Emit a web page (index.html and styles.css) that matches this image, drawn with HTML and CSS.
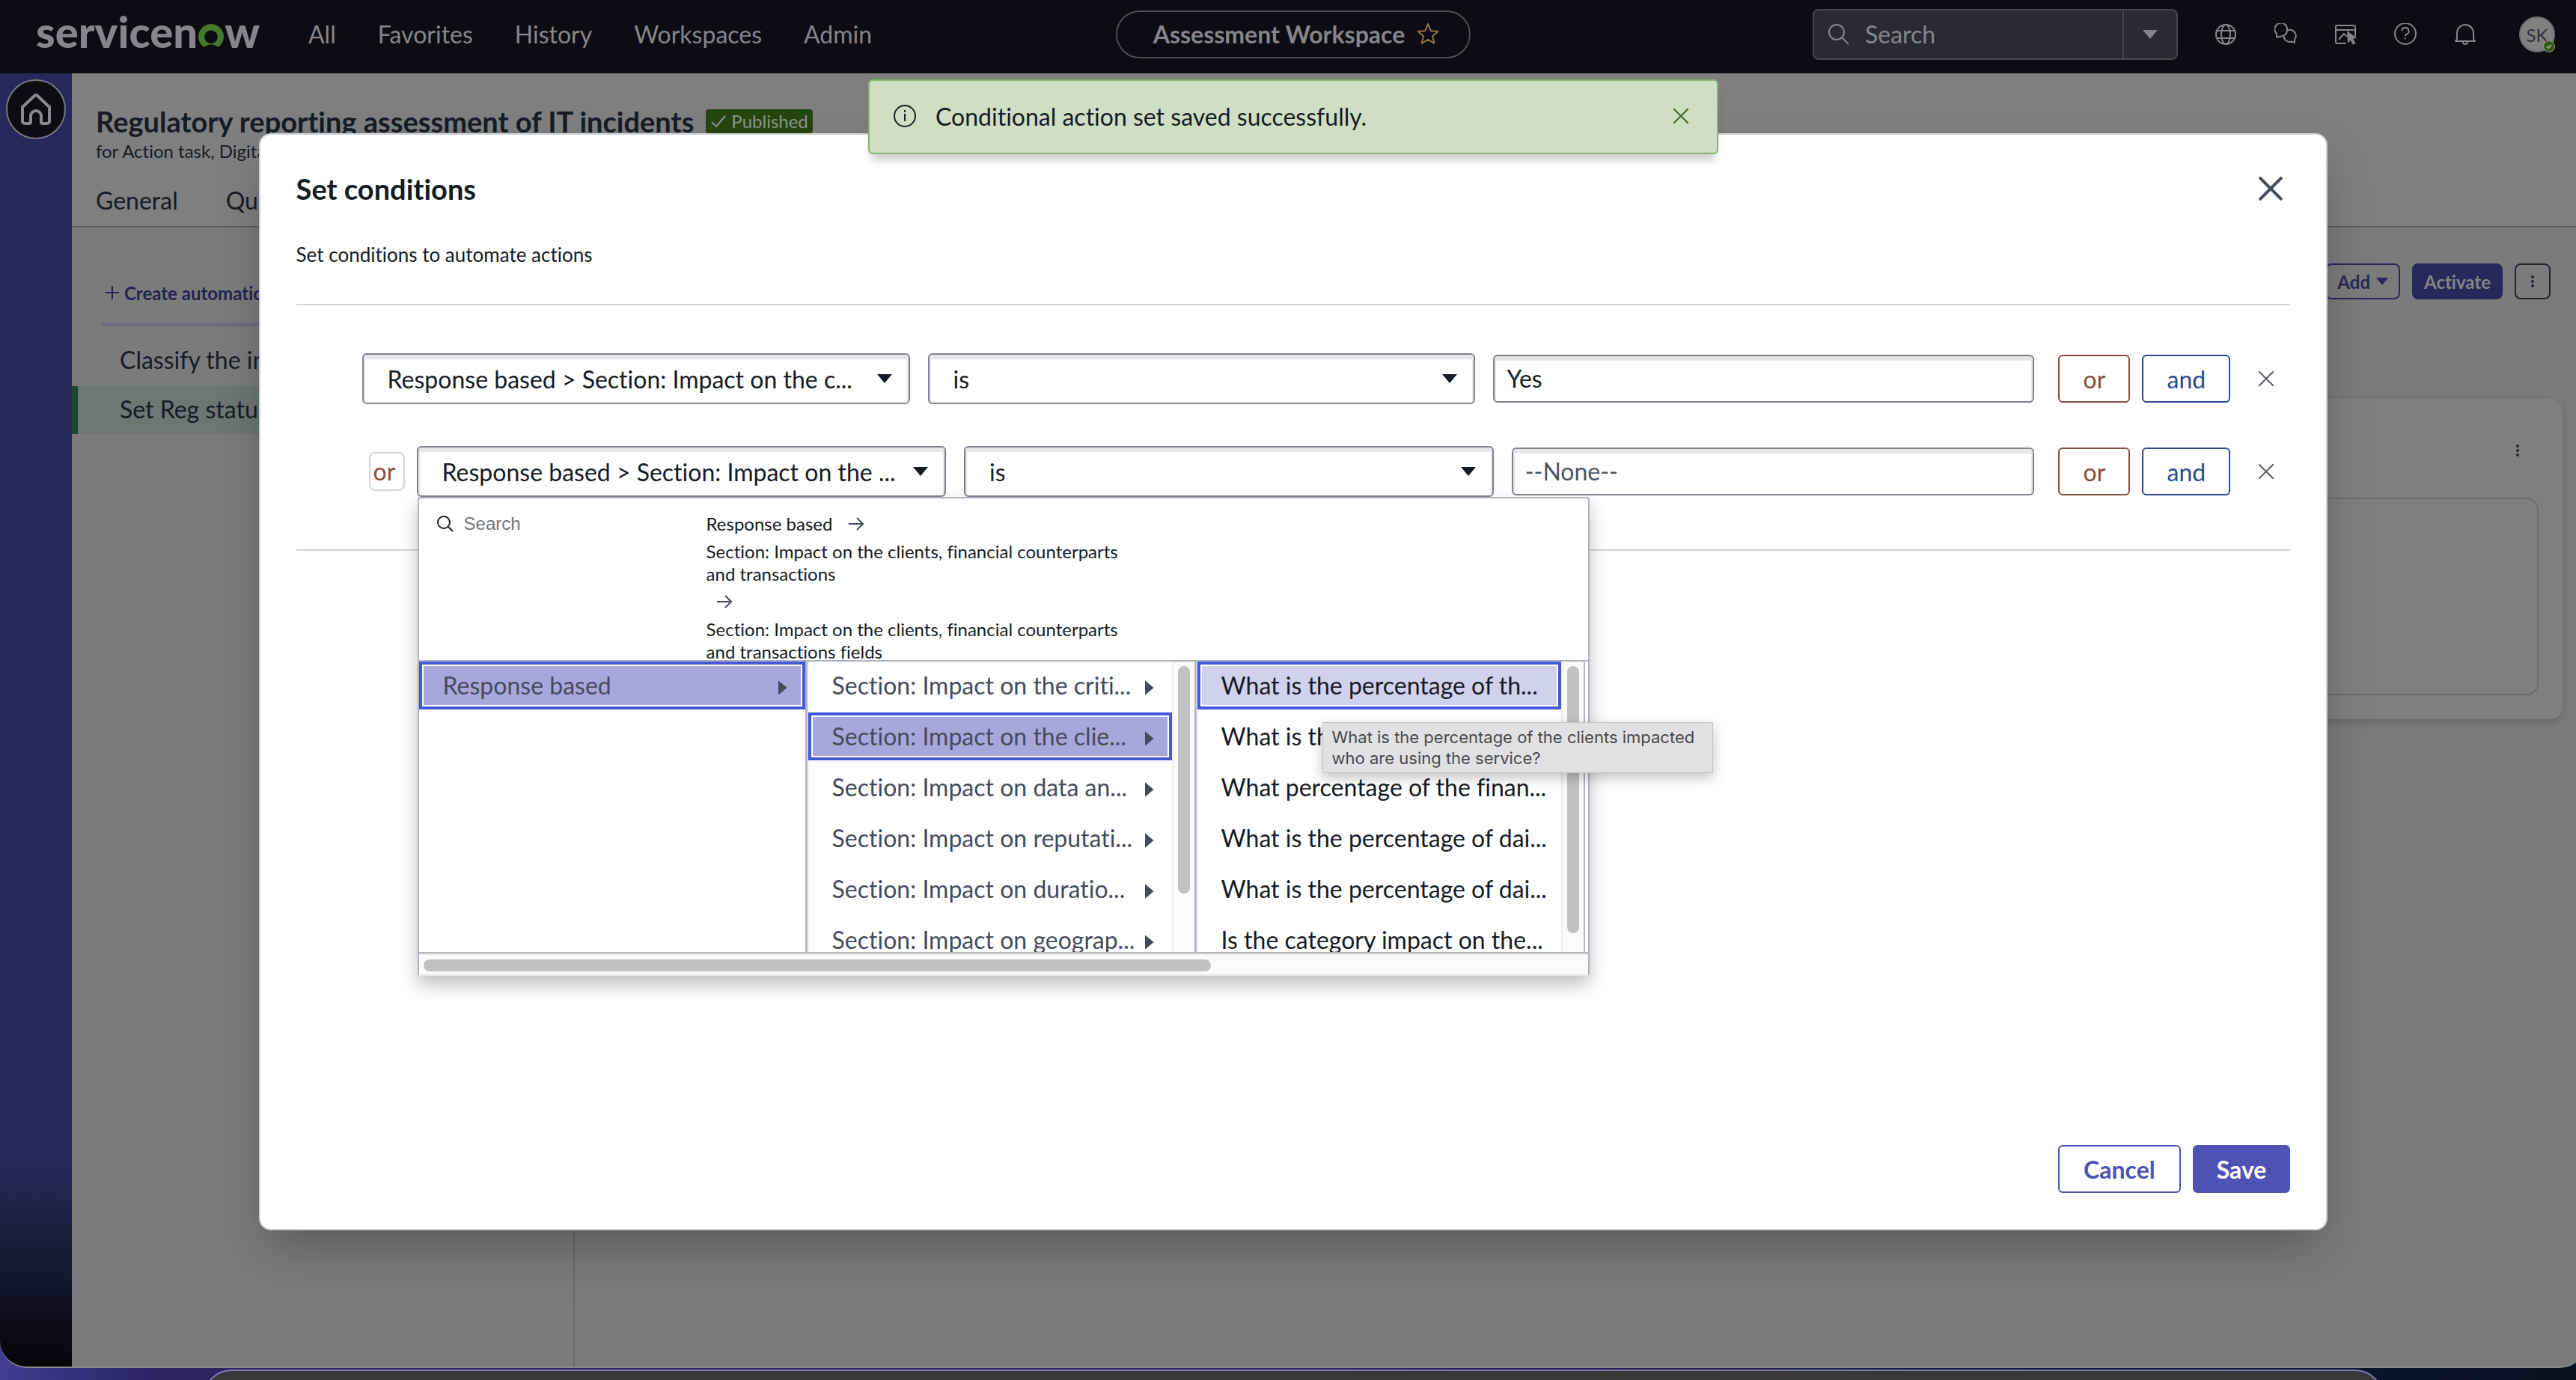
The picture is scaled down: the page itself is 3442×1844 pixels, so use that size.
FILE: index.html
```html
<!DOCTYPE html>
<html lang="en">

<head>
  <meta charset="utf-8">
  <title>Assessment Workspace</title>
  <link rel="stylesheet" href="styles.css">
</head>

<body>

  <div class="window">

    <header class="topbar">
      <div class="topbar-left">
        <a class="logo" href="#" aria-label="servicenow"><span>servicen</span><svg viewBox="0 0 36 32" width="36" height="32"><path d="M18 0a17 17 0 0 0-11.500 29.500a3 3 0 0 0 4 .3a12.500 12.500 0 0 1 15 0a3 3 0 0 0 4-.3A17 17 0 0 0 18 0zM18 8.500a8.800 8.800 0 1 1 0 17.600a8.800 8.800 0 0 1 0-17.600z" fill="#457a2c" fill-rule="evenodd"/></svg><span>w</span></a>
        <nav class="nav">
          <a href="#">All</a>
          <a href="#">Favorites</a>
          <a href="#">History</a>
          <a href="#">Workspaces</a>
          <a href="#">Admin</a>
        </nav>
      </div>

      <button class="workspace-pill">
        Assessment Workspace
        <svg viewBox="0 0 30 30" width="30" height="30" fill="none" stroke="#8b754a" stroke-width="2" stroke-linejoin="round"><path d="M15 2l3.800 9.200 9.700.8-7.400 6.300 2.300 9.700-8.400-5.200L6.600 28l2.300-9.700L1.500 12l9.700-.8z"/></svg>
      </button>

      <div class="topbar-right">
        <div class="search">
          <label class="search-main">
            <svg viewBox="0 0 30 30" width="30" height="30" fill="none" stroke="#85858a" stroke-width="2"><circle cx="12" cy="12" r="10"/><path d="M19 19l9 9"/></svg>
            <input type="text" placeholder="Search" aria-label="Search">
          </label>
          <button class="search-scope" aria-label="Search scope"><svg viewBox="0 0 20 12" width="20" height="12"><path d="M0 0h20L10 12z" fill="#85858a"/></svg></button>
        </div>
        <div class="tools">
          <button aria-label="Scope"><svg viewBox="0 0 30 30"><circle cx="15" cy="15" r="13"/><ellipse cx="15" cy="15" rx="6" ry="13"/><path d="M3 10h24M3 20h24"/></svg></button>
          <button aria-label="Chat"><svg viewBox="0 0 30 30"><path d="M3 19v-5a8.300 8.300 0 1 1 14-6a8.300 8.300 0 0 1-9 9.500z"/><path d="M18 9.500a7.800 7.800 0 0 1 9 12V26l-4-1.500A8 8 0 0 1 12.500 18"/></svg></button>
          <button aria-label="Guidance"><svg viewBox="0 0 30 30"><path d="M16 27H4a2 2 0 0 1-2-2V5a2 2 0 0 1 2-2h22a2 2 0 0 1 2 2v13M2 9h26M6 22l7-8 4 4"/><path d="M17 10l13 10-5 .8 3.500 6-3.500 2-3.500-6-3.500 4z" fill="#85858a" stroke="none"/></svg></button>
          <button aria-label="Help"><svg viewBox="0 0 30 30"><circle cx="15" cy="14" r="14"/><path d="M10.500 10.500a4.500 4.500 0 1 1 6.500 4c-1.500.8-2 1.500-2 3M15 19.500v2"/></svg></button>
          <button aria-label="Notifications"><svg viewBox="0 0 30 30"><path d="M4 21V13a11 11 0 0 1 22 0v8l2 3H2zM12 25a3 3 0 0 0 6 0"/></svg></button>
        </div>
        <button class="avatar">SK<span class="presence"><svg viewBox="0 0 14 14" width="14" height="14"><path d="M4 7l2 2 4-4" fill="none" stroke="#9a9a9a" stroke-width="2"/></svg></span></button>
      </div>
    </header>

    <div class="layout">
      <aside class="rail">
        <a class="home" href="#" aria-label="Home"><svg viewBox="0 0 44 44" width="44" height="44" fill="none" stroke="#8a8a8a" stroke-width="4" stroke-linejoin="round"><path d="M4 19L20 4a3 3 0 0 1 4 0l16 15v19a3 3 0 0 1-3 3h-6a2 2 0 0 1-2-2v-8a7 7 0 0 0-14 0v8a2 2 0 0 1-2 2H7a3 3 0 0 1-3-3z"/></svg></a>
      </aside>

      <main class="content">
        <div class="page-head">
          <div class="title-row">
            <h1>Regulatory reporting assessment of IT incidents</h1>
            <span class="badge"><svg viewBox="0 0 22 22" width="22" height="22"><path d="M2 12l6 6L20 4" fill="none" stroke="#8f948c" stroke-width="2"/></svg>Published</span>
          </div>
          <p>for Action task, Digital</p>
          <nav class="tabs">
            <a href="#">General</a>
            <a href="#">Questions</a>
          </nav>
        </div>

        <div class="page-body">
          <section class="automations">
            <button class="create"><svg viewBox="0 0 20 20" width="20" height="20"><path d="M10 1v18M1 10h18" stroke="#23234f" stroke-width="2"/></svg>Create automation</button>
            <ul>
              <li><a href="#">Classify the incident</a></li>
              <li class="selected"><a href="#">Set Reg status</a></li>
            </ul>
          </section>
          <section class="detail">
            <div class="detail-actions">
              <button class="btn-sm">Add <svg viewBox="0 0 16 10" width="16" height="10"><path d="M0 0h16L8 10z" fill="#28285a"/></svg></button>
              <button class="btn-sm btn-sm-primary">Activate</button>
              <button class="btn-sm btn-sm-icon" aria-label="More"><svg viewBox="0 0 4 16" width="4" height="16" fill="#222430"><circle cx="2" cy="2" r="2"/><circle cx="2" cy="8" r="2"/><circle cx="2" cy="14" r="2"/></svg></button>
            </div>
            <div class="card">
              <button class="card-more" aria-label="More"><svg viewBox="0 0 4 16" width="4" height="16" fill="#222430"><circle cx="2" cy="2" r="2"/><circle cx="2" cy="8" r="2"/><circle cx="2" cy="14" r="2"/></svg></button>
              <div class="card-inner"></div>
            </div>
          </section>
        </div>
      </main>
    </div>

    <div class="modal" role="dialog" aria-labelledby="modal-title">
      <div class="modal-head">
        <h2 id="modal-title">Set conditions</h2>
        <button aria-label="Close"><svg viewBox="0 0 32 32" width="32" height="32"><path d="M1 1l30 30M31 1L1 31" stroke="#464b5b" stroke-width="4"/></svg></button>
      </div>
      <p class="modal-text">Set conditions to automate actions</p>

      <div class="conditions">
        <div class="condition">
          <div class="fields">
            <select aria-label="Field"><option>Response based &gt; Section: Impact on the c...</option></select>
            <select aria-label="Operator"><option>is</option></select>
            <input type="text" value="Yes" aria-label="Value">
          </div>
          <button class="btn-or">or</button>
          <button class="btn-and">and</button>
          <button class="remove" aria-label="Remove condition"><svg viewBox="0 0 20 20" width="20" height="20"><path d="M0 0l20 20M20 0L0 20" stroke="#5a5f6c" stroke-width="2"/></svg></button>
        </div>

        <div class="condition nested">
          <span class="joiner">or</span>
          <div class="fields">
            <div class="picker">
              <select aria-label="Field"><option>Response based &gt; Section: Impact on the ...</option></select>

              <div class="menu">
                <div class="menu-head">
                  <label class="menu-search">
                    <svg viewBox="0 0 22 22" width="22" height="22" fill="none" stroke="#1c1f27" stroke-width="2"><circle cx="9" cy="9" r="8"/><path d="M15 15l6 6"/></svg>
                    <input type="text" placeholder="Search" aria-label="Search fields">
                  </label>
                  <div class="crumbs">
                    <span class="crumb-root">Response based</span>
                    <svg viewBox="0 0 20 18"><path d="M0 9h19M11 1l8 8-8 8"/></svg>
                    <span>Section: Impact on the clients, financial counterparts and transactions</span>
                    <svg viewBox="0 0 20 18"><path d="M0 9h19M11 1l8 8-8 8"/></svg>
                    <span>Section: Impact on the clients, financial counterparts and transactions fields</span>
                  </div>
                </div>

                <div class="columns">
                  <div class="column">
                    <div class="items">
                      <button class="item parent active">Response based</button>
                    </div>
                  </div>
                  <div class="column">
                    <div class="items">
                      <button class="item parent">Section: Impact on the criti...</button>
                      <button class="item parent active">Section: Impact on the clie...</button>
                      <button class="item parent">Section: Impact on data an...</button>
                      <button class="item parent">Section: Impact on reputati...</button>
                      <button class="item parent">Section: Impact on duratio...</button>
                      <button class="item parent">Section: Impact on geograp...</button>
                    </div>
                    <div class="vscroll"><div class="thumb thumb-sections"></div></div>
                  </div>
                  <div class="column">
                    <div class="items">
                      <button class="item hovered">What is the percentage of th...</button>
                      <button class="item">What is the percentage of th...</button>
                      <button class="item">What percentage of the finan...</button>
                      <button class="item">What is the percentage of dai...</button>
                      <button class="item">What is the percentage of dai...</button>
                      <button class="item">Is the category impact on the...</button>
                    </div>
                    <div class="vscroll"><div class="thumb thumb-questions"></div></div>
                  </div>
                </div>
                <div class="hscroll"><div class="thumb"></div></div>

                <div class="tooltip" role="tooltip">What is the percentage of the clients impacted<br>who are using the service?</div>
              </div>
            </div>
            <select aria-label="Operator"><option>is</option></select>
            <input type="text" placeholder="--None--" aria-label="Value">
          </div>
          <button class="btn-or">or</button>
          <button class="btn-and">and</button>
          <button class="remove" aria-label="Remove condition"><svg viewBox="0 0 20 20" width="20" height="20"><path d="M0 0l20 20M20 0L0 20" stroke="#5a5f6c" stroke-width="2"/></svg></button>
        </div>
      </div>

      <div class="modal-foot">
        <button class="btn">Cancel</button>
        <button class="btn btn-primary">Save</button>
      </div>
    </div>

    <div class="toast" role="status">
      <svg viewBox="0 0 30 30" width="30" height="30" fill="none" stroke="#1a1f26" stroke-width="2"><circle cx="15" cy="15" r="14"/><path d="M15 12v10M15 7v3"/></svg>
      <span>Conditional action set saved successfully.</span>
      <button aria-label="Dismiss"><svg viewBox="0 0 20 20" width="20" height="20"><path d="M0 0l20 20M20 0L0 20" stroke="#3c6a1e" stroke-width="2"/></svg></button>
    </div>

  </div>

  <div class="dock"></div>

</body>

</html>
```
FILE: styles.css
```css
* {
  box-sizing: border-box;
}

body {
  margin: 0;
  height: 100vh;
  overflow: hidden;
  position: relative;
  background: linear-gradient(90deg, #423a92, #2b2362 6%, #2b2460 50%, #0a1830 85%, #08111f);
  font-family: Lato, sans-serif;
  font-size: 32px;
  font-variant-ligatures: none;
  color: #161b24;
}

h1,
h2,
p,
ul {
  margin: 0;
  padding: 0;
}

a {
  color: inherit;
  text-decoration: none;
}

button,
input,
select {
  font: inherit;
  font-variant-ligatures: none;
  color: inherit;
}

button {
  padding: 0;
  border: none;
  background: none;
}

svg {
  flex: none;
}

/* the window runs a little past the right edge of the screen */
.window {
  position: relative;
  width: calc(100% + 14px);
  height: calc(100vh - 16px);
  display: flex;
  flex-direction: column;
  overflow: hidden;
  border-radius: 0 0 36px 36px;
  border-bottom: 2px solid #8a8a8a;
  background: #7b7b7b;
}

.dock {
  position: absolute;
  left: 272px;
  right: 258px;
  bottom: -60px;
  height: 74px;
  border: 2px solid #7f78ad;
  border-radius: 40px;
  background: #383838;
}

/* top bar */

.topbar {
  height: 98px;
  flex: none;
  display: grid;
  grid-template-columns: 1fr auto 1fr;
  align-items: center;
  padding: 0 42px 6px;
  background: #0d0c12;
  color: #85858a;
}

.topbar-left {
  display: flex;
  align-items: center;
  padding-left: 6px;
}

.logo {
  display: flex;
  align-items: baseline;
  width: 364px;
  height: 64px;
  line-height: 56px;
  font-size: 58px;
  font-weight: 900;
}

.nav {
  display: flex;
  gap: 56px;
  padding-bottom: 2px;
}

.workspace-pill {
  display: flex;
  align-items: center;
  gap: 16px;
  height: 64px;
  padding: 0 40px 2px 48px;
  border: 2px solid #4e4d55;
  border-radius: 32px;
  font-weight: bold;
}

.topbar-right {
  display: flex;
  align-items: center;
  justify-content: flex-end;
}

.search {
  display: flex;
  width: 488px;
  height: 68px;
  border: 2px solid #46464e;
  border-radius: 8px;
  background: #2a2a33;
}

.search-main {
  flex: 1;
  display: flex;
  align-items: center;
  gap: 20px;
  padding-left: 18px;
  border-right: 2px solid #46464e;
}

.search-main input {
  width: 300px;
  padding: 0 0 2px;
  border: none;
  background: none;
}

.search-main input::placeholder {
  color: #85858a;
}

.search-scope {
  width: 70px;
}

.search-scope svg {
  display: block;
  margin: auto;
}

.tools {
  display: flex;
  margin: 0 32px 0 24px;
}

.tools button {
  width: 80px;
  height: 64px;
}

.tools svg {
  display: block;
  width: 30px;
  height: 30px;
  margin: auto;
  fill: none;
  stroke: #85858a;
  stroke-width: 2;
  stroke-linejoin: round;
}

.avatar {
  position: relative;
  width: 48px;
  height: 48px;
  border: 2px solid #6f6f78;
  border-radius: 50%;
  background: #808080;
  color: #2e313c;
  font-size: 24px;
}

.presence {
  position: absolute;
  right: -2px;
  bottom: -2px;
  width: 16px;
  height: 16px;
  border: 1px solid #9a9a9a;
  border-radius: 50%;
  background: #33590f;
}

.presence svg {
  display: block;
}

/* page behind the dialog */

.layout {
  flex: 1;
  display: flex;
}

.rail {
  width: 96px;
  padding: 8px;
  background: linear-gradient(#28285a 84%, #1c1c3c 90%, #050507);
}

.home {
  display: flex;
  align-items: center;
  justify-content: center;
  width: 80px;
  height: 80px;
  border: 2px solid #77777f;
  border-radius: 50%;
  background: #0d0c12;
}

.content {
  flex: 1;
  display: flex;
  flex-direction: column;
}

.page-head {
  padding: 40px 32px 0;
  border-bottom: 2px solid #5b5b66;
  background: #7f7f7f;
}

.title-row {
  display: flex;
  align-items: center;
  gap: 16px;
}

h1,
h2 {
  font-size: 38px;
  line-height: 48px;
  font-weight: bold;
}

.badge {
  display: flex;
  align-items: center;
  gap: 6px;
  padding: 0 6px;
  border-radius: 4px;
  background: #26460f;
  color: #8f948c;
  font-size: 24px;
  line-height: 32px;
}

.page-head p {
  font-size: 24px;
  line-height: 32px;
}

.tabs {
  display: flex;
  gap: 64px;
  margin-top: 18px;
  padding-bottom: 2px;
  line-height: 64px;
}

.page-body {
  flex: 1;
  display: flex;
}

.automations {
  width: 672px;
  padding-top: 72px;
  border-right: 2px solid #6a6a6a;
}

.create {
  display: flex;
  align-items: center;
  gap: 6px;
  width: 632px;
  height: 60px;
  margin-left: 40px;
  padding: 0 0 26px 4px;
  border-bottom: 4px solid #6b6b78;
  color: #23234f;
  font-size: 24px;
  font-weight: bold;
}

.automations ul {
  display: flex;
  flex-direction: column;
  gap: 2px;
  margin-top: 14px;
  list-style: none;
}

.automations li {
  padding: 0 0 2px 56px;
  border-left: 8px solid transparent;
  line-height: 62px;
}

.automations .selected {
  border-color: #1d4430;
  background: #6d7673;
}

.detail {
  flex: 1;
  padding: 48px 32px 0;
}

.detail-actions {
  display: flex;
  justify-content: flex-end;
  gap: 16px;
  padding-right: 16px;
}

.btn-sm {
  display: flex;
  align-items: center;
  justify-content: center;
  gap: 8px;
  height: 48px;
  padding: 0 14px;
  border: 2px solid #28285a;
  border-radius: 8px;
  color: #28285a;
  font-size: 24px;
  font-weight: bold;
}

.btn-sm-primary {
  background: #28285a;
  color: #858585;
}

.btn-sm-icon {
  width: 48px;
  border-color: #222430;
}

.card {
  display: flex;
  flex-direction: column;
  align-items: flex-end;
  gap: 44px;
  margin-top: 133px;
  padding: 40px 32px 32px;
  border-radius: 16px;
  background: #7f7f7f;
  box-shadow: 0 4px 12px rgba(0, 0, 0, .18);
}

.card-more {
  width: 56px;
  height: 48px;
}

.card-inner {
  width: 100%;
  height: 264px;
  border: 2px solid #6b6b73;
  border-radius: 16px;
}

/* dialog */

.modal {
  position: absolute;
  top: 178px;
  right: 10%;
  bottom: 182px;
  left: 10%;
  display: flex;
  flex-direction: column;
  padding: 48px;
  border: 2px solid #cfd0d8;
  border-radius: 16px;
  background: #fff;
  box-shadow: 0 32px 64px -8px rgba(0, 0, 0, .25);
}

.modal-head {
  display: flex;
  align-items: center;
  justify-content: space-between;
  padding-right: 10px;
}

.modal-head svg {
  display: block;
}

.modal-text {
  padding: 48px 0 50px;
  border-bottom: 2px solid #d4d5dc;
  font-size: 26px;
  line-height: 32px;
}

.conditions {
  display: flex;
  flex-direction: column;
  gap: 56px;
  padding: 64px 8px 70px 88px;
  border-bottom: 2px solid #d4d5dc;
}

.condition {
  display: flex;
  align-items: center;
}

.nested {
  padding-left: 9px;
}

.fields {
  flex: 1;
  display: grid;
  grid-template-columns: 81fr 81fr 80fr;
  gap: 24px;
  align-items: center;
  margin-right: 32px;
}

.fields select,
.fields > input {
  width: 100%;
  min-width: 0;
  border: 2px solid #80838f;
  border-radius: 6px;
  background-color: #fff;
  box-shadow: inset 0 4px 0 2px #e6e8e8;
}

.fields select {
  display: block;
  height: 68px;
  padding: 0 50px 0 32px;
  appearance: none;
  background-image: url("data:image/svg+xml,%3Csvg xmlns='http://www.w3.org/2000/svg' width='20' height='12'%3E%3Cpath d='M0 0h20L10 12z' fill='%23161b24'/%3E%3C/svg%3E");
  background-repeat: no-repeat;
  background-position: right 22px center;
}

.fields > input {
  height: 64px;
  padding: 0 16px 2px;
}

.fields > input::placeholder {
  color: #4f5462;
}

.joiner {
  width: 48px;
  margin-right: 16px;
  padding-left: 4px;
  border: 2px solid #d4d5dc;
  border-radius: 8px;
  color: #8b4b39;
  line-height: 48px;
}

.btn-or,
.btn-and {
  height: 64px;
  border: 2px solid;
  border-radius: 6px;
}

.btn-or {
  width: 96px;
  margin-right: 16px;
  color: #8b4b39;
}

.btn-and {
  width: 118px;
  margin-right: 24px;
  color: #2a4b8d;
}

.remove {
  width: 48px;
  height: 48px;
}

.remove svg {
  display: block;
  margin: auto;
}

.modal-foot {
  display: flex;
  justify-content: flex-end;
  gap: 16px;
  margin-top: auto;
}

.btn {
  height: 64px;
  padding: 0 32px;
  border: 2px solid #4f52b5;
  border-radius: 6px;
  color: #4f52b5;
  font-weight: bold;
}

.btn-primary {
  padding: 0 30px;
  background: #4f52b5;
  color: #fff;
}

/* field menu, opens under the first select */

.picker {
  position: relative;
}

.menu {
  position: absolute;
  z-index: 1;
  top: 68px;
  left: 1px;
  width: 1566px;
  border: 2px solid #b0b4bf;
  border-bottom: none;
  border-radius: 4px;
  background: #fff;
  box-shadow: 0 12px 24px rgba(0, 0, 0, .25);
}

.menu-head {
  display: flex;
  height: 218px;
  overflow: hidden;
  padding: 12px 24px 0;
  border-bottom: 2px solid #b0b4bf;
  font-size: 24px;
  line-height: 30px;
}

.menu-search {
  display: flex;
  align-items: center;
  gap: 14px;
  width: 360px;
  height: 44px;
}

.menu-search input {
  width: 240px;
  padding: 0;
  border: none;
  font-family: "Liberation Sans", sans-serif;
}

.menu-search input::placeholder {
  color: #757575;
}

.crumbs {
  display: flex;
  flex-wrap: wrap;
  align-items: center;
  align-content: flex-start;
  width: 576px;
}

.crumb-root {
  margin-right: 8px;
}

.crumbs svg {
  width: 20px;
  height: 18px;
  margin: 13px 14px;
  overflow: visible;
  fill: none;
  stroke: #464b5b;
  stroke-width: 2;
}

.columns {
  display: flex;
  height: 390px;
  overflow: hidden;
  border-bottom: 2px solid #b0b4bf;
}

.column {
  flex: none;
  display: flex;
  width: 520px;
  border-right: 2px solid #b0b4bf;
}

.column:first-child {
  width: 518px;
}

.column + .column {
  border-left: 2px solid #cfd0d8;
}

.items {
  flex: 1;
  display: flex;
  flex-direction: column;
  gap: 4px;
}

.item {
  flex: none;
  height: 64px;
  padding-left: 28px;
  border: 4px solid transparent;
  text-align: left;
  line-height: 56px;
}

.parent {
  display: flex;
  justify-content: space-between;
  padding-right: 20px;
  color: #464b5b;
}

.parent::after {
  content: "";
  width: 12px;
  height: 20px;
  margin-top: 21px;
  background: #464b5b;
  clip-path: polygon(0 0, 100% 50%, 0 100%);
}

.active,
.hovered {
  border-color: #4358dd;
  box-shadow: inset 0 0 0 2px #fff;
}

.active {
  background: #a8a7dc;
}

.hovered {
  background: #d1d1ed;
}

.vscroll {
  width: 30px;
  padding: 6px;
  border-left: 2px solid #ededed;
  background: #fafafa;
}

.thumb {
  width: 16px;
  border-radius: 8px;
  background: #c1c1c1;
}

.thumb-sections {
  height: 304px;
}

.thumb-questions {
  height: 357px;
}

.hscroll {
  height: 30px;
  padding: 6px;
  border: solid #e8e8e8;
  border-width: 2px 0;
  background: #fafafa;
}

.hscroll .thumb {
  width: 1052px;
  height: 16px;
}

.tooltip {
  position: absolute;
  top: 299px;
  left: 1207px;
  padding: 5px 24px 5px 12px;
  border: 1px solid #c4c4c6;
  background: #e1e1e3;
  box-shadow: 0 6px 16px rgba(0, 0, 0, .25);
  color: #48484a;
  font-family: Inter, sans-serif;
  font-size: 22px;
  line-height: 28px;
  white-space: nowrap;
}

/* message */

.toast {
  position: absolute;
  top: 106px;
  left: 50%;
  width: 1136px;
  height: 100px;
  margin-left: -568px;
  display: flex;
  align-items: center;
  gap: 26px;
  padding: 0 38px 2px 32px;
  border: 2px solid #87b36c;
  border-radius: 6px;
  background: #cedfc3;
  box-shadow: 0 12px 12px -4px rgba(0, 0, 0, .2);
}

.toast button {
  margin-left: auto;
}

.toast svg {
  display: block;
}
```
